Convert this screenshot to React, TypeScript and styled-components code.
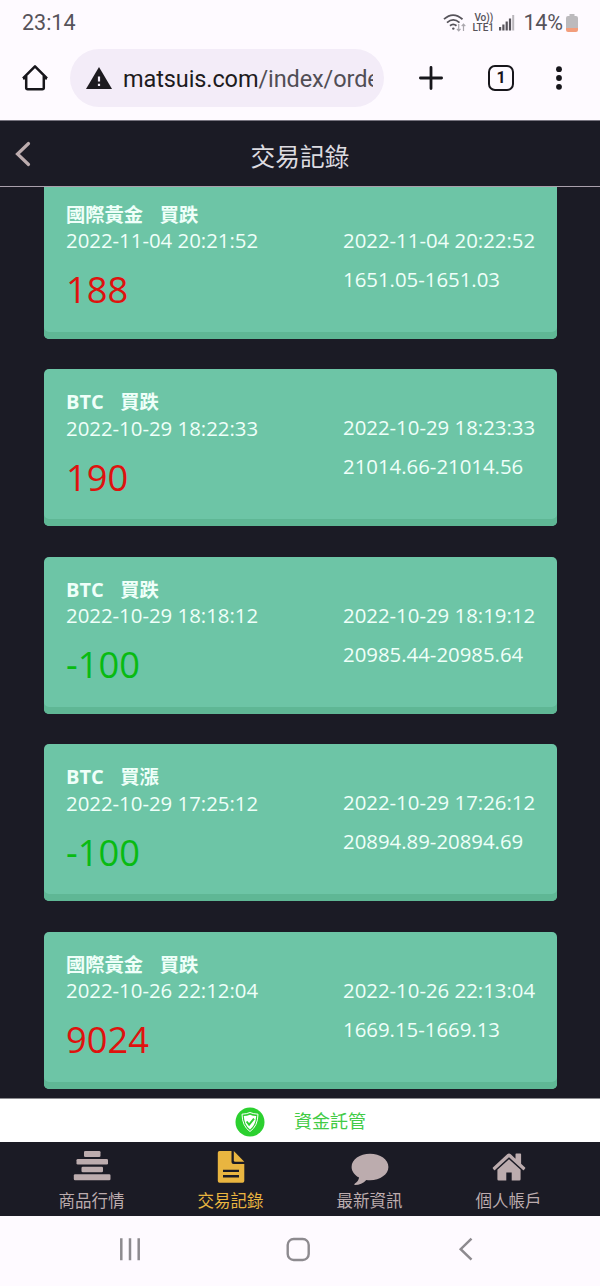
import React from "react";
import styled, { createGlobalStyle } from "styled-components";

const Global = createGlobalStyle`
  * { box-sizing: border-box; }
  body { margin: 0; background: #1b1b25; font-family: "Open Sans", "Noto Sans CJK TC", sans-serif; }
  svg { display: block; flex: none; }
`;

const Screen = styled.div`
  width: 600px;
  height: 1286px;
  display: flex;
  flex-direction: column;
  overflow: hidden;
  background: #1b1b25;
`;

const StatusBar = styled.div`
  height: 44px;
  flex: none;
  display: flex;
  align-items: center;
  padding: 1px 21px 0 22px;
  background: #fefaff;
  color: #56535a;
  font: 21.5px/28px Roboto, sans-serif;
`;

const Clock = styled.span`
  flex: 1;
`;

const Network = styled.span`
  width: 23px;
  margin: 0 4px 0 5px;
  display: flex;
  flex-direction: column;
  font: 500 10px/10px Roboto, sans-serif;
  white-space: nowrap;
`;

const NetworkLine = styled.span<{ $indent?: number }>`
  padding-left: ${(p) => p.$indent ?? 0}px;
`;

const Battery = styled.span`
  margin: 0 3px 0 8px;
  letter-spacing: -0.1px;
`;

const BrowserBar = styled.div`
  height: 76px;
  flex: none;
  display: flex;
  align-items: flex-start;
  padding: 5px 33px 0 21px;
  background: #fefaff;
`;

const BarIcon = styled.div<{ $width: number; $gap?: number }>`
  width: ${(p) => p.$width}px;
  height: 58px;
  margin-left: ${(p) => p.$gap ?? 0}px;
  display: flex;
  align-items: center;
  justify-content: center;
`;

const AddressBar = styled.div`
  width: 314px;
  height: 58px;
  margin-left: 21px;
  padding: 0 11px 0 16px;
  display: flex;
  align-items: center;
  gap: 11px;
  border-radius: 29px;
  background: #f3ecf8;
`;

const Url = styled.div`
  flex: 1;
  overflow: hidden;
  white-space: nowrap;
  padding-top: 2px;
  font: 23.5px/32px Roboto, sans-serif;
  letter-spacing: -0.1px;
  color: #1d1b20;
`;

const UrlPath = styled.span`
  color: #514e55;
`;

const PageHeader = styled.header`
  height: 67px;
  flex: none;
  display: grid;
  grid-template-columns: 46px 1fr 46px;
  align-items: center;
  border-top: 1px solid #77747f;
  border-bottom: 1px solid #aaa0ac;
`;

const BackButton = styled.div`
  padding-left: 14px;
`;

const PageTitle = styled.h1`
  margin: 0;
  padding-top: 3px;
  text-align: center;
  font: 400 24.7px/36px "Noto Sans CJK TC", sans-serif;
  color: #dddbe0;
`;

const Records = styled.main`
  flex: 1;
  min-height: 0;
  overflow: hidden;
  display: flex;
  flex-direction: column;
  justify-content: flex-end;
  gap: 30.5px;
  padding: 0 43px 9.5px 44px;
`;

const Card = styled.article`
  height: 157px;
  flex: none;
  display: grid;
  grid-template-columns: 277px 1fr;
  padding: 19px 0 0 22px;
  border-radius: 5px;
  background: #6dc5a6;
  box-shadow: inset 0 -7px 0 #5fb795;
  color: #effff9;
`;

const Column = styled.div`
  display: flex;
  flex-direction: column;
  white-space: nowrap;
`;

const Product = styled.div`
  display: flex;
  gap: 16.5px;
  font-size: 19.3px;
  font-weight: 700;
  line-height: 27px;
`;

const ProductName = styled.span<{ $latin: boolean }>`
  font-size: ${(p) => (p.$latin ? 20 : 19.3)}px;
`;

const Time = styled.div<{ $closing?: boolean }>`
  margin-top: ${(p) => (p.$closing ? 26 : -0.5)}px;
  font-size: 20.36px;
  line-height: 26px;
`;

const Price = styled.div`
  margin-top: 13px;
  font-size: 20.36px;
  line-height: 26px;
`;

const Amount = styled.div<{ $loss: boolean }>`
  margin-top: 11px;
  font-size: 36.3px;
  line-height: 50px;
  color: ${(p) => (p.$loss ? "#08bb12" : "#df120e")};
`;

const Custody = styled.div`
  height: 44px;
  flex: none;
  display: flex;
  align-items: center;
  gap: 29px;
  padding: 3px 0 0 235px;
  border-top: 1px solid #8c8c90;
  background: #fff;
  color: #42cb46;
  font: 18px/26px "Noto Sans CJK TC", sans-serif;
`;

const CustodyLabel = styled.span`
  margin-top: -4px;
`;

const TabBar = styled.nav`
  height: 74px;
  flex: none;
  display: grid;
  grid-template-columns: repeat(4, 139px);
  justify-content: center;
`;

const Tab = styled.div<{ $active?: boolean }>`
  display: flex;
  flex-direction: column;
  align-items: center;
  padding-top: 6px;
  color: ${(p) => (p.$active ? "#e9b540" : "#bcacae")};
  font: 16.5px/24px "Noto Sans CJK TC", sans-serif;
`;

const TabIcon = styled.div`
  height: 40px;
`;

const SystemNav = styled.div`
  height: 70px;
  flex: none;
  display: flex;
  justify-content: space-between;
  padding: 20px 126px 0 117px;
  background: #fefaff;
`;

const records = [
  { name: "國際黃金", side: "買跌", open: "2022-11-04 20:21:52", close: "2022-11-04 20:22:52", amount: 188, price: "1651.05-1651.03" },
  { name: "BTC", side: "買跌", open: "2022-10-29 18:22:33", close: "2022-10-29 18:23:33", amount: 190, price: "21014.66-21014.56" },
  { name: "BTC", side: "買跌", open: "2022-10-29 18:18:12", close: "2022-10-29 18:19:12", amount: -100, price: "20985.44-20985.64" },
  { name: "BTC", side: "買漲", open: "2022-10-29 17:25:12", close: "2022-10-29 17:26:12", amount: -100, price: "20894.89-20894.69" },
  { name: "國際黃金", side: "買跌", open: "2022-10-26 22:12:04", close: "2022-10-26 22:13:04", amount: 9024, price: "1669.15-1669.13" },
];

const WifiIcon = () => (
  <svg width="24" height="20" viewBox="0 0 24 20" fill="none" stroke="#56535a" strokeWidth="1.8">
    <path d="M1 6.200Q10 -2 19.500 6.200M4 9.600Q10.200 4.200 16.500 9.600M7 12.800Q10.200 10 13.500 12.800" />
    <circle cx="10.300" cy="15.600" r="1.200" fill="#56535a" stroke="none" />
    <path d="M15.700 11v6.500M13.900 15.800l1.800 2 1.800-2M20.500 18v-6.500M18.700 13.200l1.800-2 1.800 2" stroke="#aaa7ad" strokeWidth="1.200" />
  </svg>
);

const SignalIcon = () => (
  <svg width="16" height="17" viewBox="0 0 16 17" fill="#56535a">
    <path d="M0 13h2.200v3.500H0zM3.300 10.500h2.200v6H3.300zM6.600 7.500h2.200v9H6.600zM9.900 4.500h2.200v12H9.900z" />
    <path d="M13.200 1h2v15.500h-2z" fill="#b9b6bb" />
  </svg>
);

const BatteryIcon = () => (
  <svg width="13" height="18" viewBox="0 0 13 18">
    <path d="M3.500 0h5v2H10a2 2 0 0 1 2 2v10H0V4a2 2 0 0 1 2-2h1.500z" fill="#bcbabd" />
    <path d="M0 14h12v2a2 2 0 0 1-2 2H2a2 2 0 0 1-2-2z" fill="#f29d7c" />
  </svg>
);

const HomeOutlineIcon = () => (
  <svg width="28" height="28" viewBox="0 0 28 28" fill="none" stroke="#17161b" strokeWidth="2.500" strokeLinejoin="round">
    <path d="M2 14.300L14 2.300 26 14.300M5.200 12v11.700q0 1.500 1.500 1.500h14.600q1.500 0 1.500-1.500V12" />
    <path d="M2 14.300h3.200M22.800 14.300H26" />
  </svg>
);

const WarningIcon = () => (
  <svg width="26" height="23" viewBox="0 0 26 23">
    <path d="M13 0L26 22H0z" fill="#1d1b20" />
    <path d="M11.900 9.500h2.200v5h-2.200zM11.900 16.800h2.200v2.300h-2.200z" fill="#f3ecf8" />
  </svg>
);

const PlusIcon = () => (
  <svg width="24" height="24" viewBox="0 0 24 24" stroke="#17161b" strokeWidth="2.800" strokeLinecap="round">
    <path d="M12 1.400v21.200M1.400 12h21.200" />
  </svg>
);

const TabCount = styled.div`
  width: 26px;
  height: 26px;
  display: grid;
  place-items: center;
  border: 2.5px solid #17161b;
  border-radius: 7px;
  font: 700 16px/20px Roboto, sans-serif;
  color: #17161b;
`;

const DotsIcon = () => (
  <svg width="6" height="24" viewBox="0 0 6 24" fill="#17161b">
    <circle cx="3" cy="3.200" r="2.900" />
    <circle cx="3" cy="12" r="2.900" />
    <circle cx="3" cy="20.800" r="2.900" />
  </svg>
);

const BackIcon = () => (
  <svg width="18" height="26" viewBox="0 0 18 26" fill="none" stroke="#bcacae" strokeWidth="3.200" strokeLinecap="round">
    <path d="M14.500 2.500L3.500 13l11 10.500" />
  </svg>
);

const ShieldIcon = () => (
  <svg width="30" height="30" viewBox="0 0 30 30">
    <circle cx="15" cy="15" r="14.500" fill="#2bd02f" />
    <path d="M15 5.500q3.500 1.500 8 1.700-.200 12-8 17.300Q7.200 19.200 7 7.200q4.500-.200 8-1.700z" fill="none" stroke="#fff" strokeWidth="1" />
    <path d="M15 7.700q3 1.200 6.200 1.300-.400 9-6.200 13.400Q9.200 18 8.800 9q3.200-.100 6.200-1.300z" fill="#fff" />
    <path d="M11.600 14.500l2.500 3.200 4.900-6" fill="none" stroke="#2bd02f" strokeWidth="1.900" />
  </svg>
);

const QuotesIcon = () => (
  <svg width="38" height="40" viewBox="0 0 38 40" fill="currentColor">
    <rect x="11" y="3" width="16.500" height="6" rx="1.300" />
    <rect x="3.500" y="11" width="31.500" height="5.500" rx="1.300" />
    <rect x="8.500" y="18.700" width="21.500" height="5.500" rx="1.300" />
    <rect x="0.800" y="26.300" width="36.700" height="6" rx="1.300" />
  </svg>
);

const RecordsIcon = () => (
  <svg width="28" height="40" viewBox="0 0 28 40" fill="currentColor">
    <path d="M2.500 3H14.500v11q0 2 2 2h10.800v17q0 1.700-1.700 1.700H2.500Q.800 34.700.800 33V4.700Q.800 3 2.500 3zM6 21.700v2.400h16v-2.400zM6 27v2.400h16V27z" fillRule="evenodd" />
    <path d="M16.800 3l10.500 10.700H18.300q-1.500 0-1.500-1.500z" />
  </svg>
);

const NewsIcon = () => (
  <svg width="38" height="40" viewBox="0 0 38 40" fill="currentColor">
    <path d="M19 5.800c10.200 0 18.400 5.900 18.400 13.200S29.200 32.200 19 32.200q-1.900 0-3.700-.300c-3 3.400-7 5-11.500 5.200-.7-.300-.6-1 .1-1.500 2.400-1.500 3.700-3.400 4.200-6C3.600 27.200.6 23.300.6 19 .6 11.700 8.800 5.800 19 5.800z" />
  </svg>
);

const AccountIcon = () => (
  <svg width="34" height="40" viewBox="0 0 34 40" fill="currentColor">
    <path d="M17 5.500q1 0 1.800.7l4.700 4.500V6.300q0-.8.800-.8h4q.8 0 .8.800v9.500l4 3.800q.5.500 0 1l-1.100 1.300q-.5.500-1 .1L17 9.200 3 22q-.500.400-1-.1L.900 20.600q-.500-.500 0-1L15.200 6.200q.8-.7 1.800-.7z" />
    <path d="M17 11.300l11.600 10.500v9.400q0 1.300-1.300 1.300h-7.600v-8h-5.400v8H6.700q-1.300 0-1.300-1.300v-9.400z" />
  </svg>
);

const RecentsIcon = () => (
  <svg width="26" height="26" viewBox="0 0 26 26" stroke="#8d8a8f" strokeWidth="2.500">
    <path d="M4.300 2.300v21.900M13 2.300v21.900M21.700 2.300v21.900" />
  </svg>
);

const HomeKeyIcon = () => (
  <svg width="31" height="26" viewBox="0 0 31 26" fill="none" stroke="#8d8a8f" strokeWidth="2.400">
    <rect x="2.700" y="3" width="21" height="21" rx="6" />
  </svg>
);

const BackKeyIcon = () => (
  <svg width="16" height="26" viewBox="0 0 16 26" fill="none" stroke="#8d8a8f" strokeWidth="2.500">
    <path d="M13.500 2.700L2.700 13.200l10.800 10.500" />
  </svg>
);

const tabs = [
  { label: "商品行情", Icon: QuotesIcon },
  { label: "交易記錄", Icon: RecordsIcon },
  { label: "最新資訊", Icon: NewsIcon },
  { label: "個人帳戶", Icon: AccountIcon },
];

export default function App() {
  return (
    <Screen>
      <Global />
      <StatusBar>
        <Clock>23:14</Clock>
        <WifiIcon />
        <Network>
          <NetworkLine $indent={2}>Vo))</NetworkLine>
          <NetworkLine>LTE1</NetworkLine>
        </Network>
        <SignalIcon />
        <Battery>14%</Battery>
        <BatteryIcon />
      </StatusBar>
      <BrowserBar>
        <BarIcon $width={28}><HomeOutlineIcon /></BarIcon>
        <AddressBar>
          <WarningIcon />
          <Url>matsuis.com<UrlPath>/index/orde</UrlPath></Url>
        </AddressBar>
        <BarIcon $width={24} $gap={35}><PlusIcon /></BarIcon>
        <BarIcon $width={26} $gap={45}><TabCount>1</TabCount></BarIcon>
        <BarIcon $width={6} $gap={42}><DotsIcon /></BarIcon>
      </BrowserBar>
      <PageHeader>
        <BackButton><BackIcon /></BackButton>
        <PageTitle>交易記錄</PageTitle>
      </PageHeader>
      <Records>
        {records.map((r) => (
          <Card key={r.open}>
            <Column>
              <Product><ProductName $latin={r.name === "BTC"}>{r.name}</ProductName><span>{r.side}</span></Product>
              <Time>{r.open}</Time>
              <Amount $loss={r.amount < 0}>{r.amount}</Amount>
            </Column>
            <Column>
              <Time $closing>{r.close}</Time>
              <Price>{r.price}</Price>
            </Column>
          </Card>
        ))}
      </Records>
      <Custody>
        <ShieldIcon />
        <CustodyLabel>資金託管</CustodyLabel>
      </Custody>
      <TabBar>
        {tabs.map(({ label, Icon }, i) => (
          <Tab key={label} $active={i === 1}>
            <TabIcon><Icon /></TabIcon>
            {label}
          </Tab>
        ))}
      </TabBar>
      <SystemNav>
        <RecentsIcon />
        <HomeKeyIcon />
        <BackKeyIcon />
      </SystemNav>
    </Screen>
  );
}
